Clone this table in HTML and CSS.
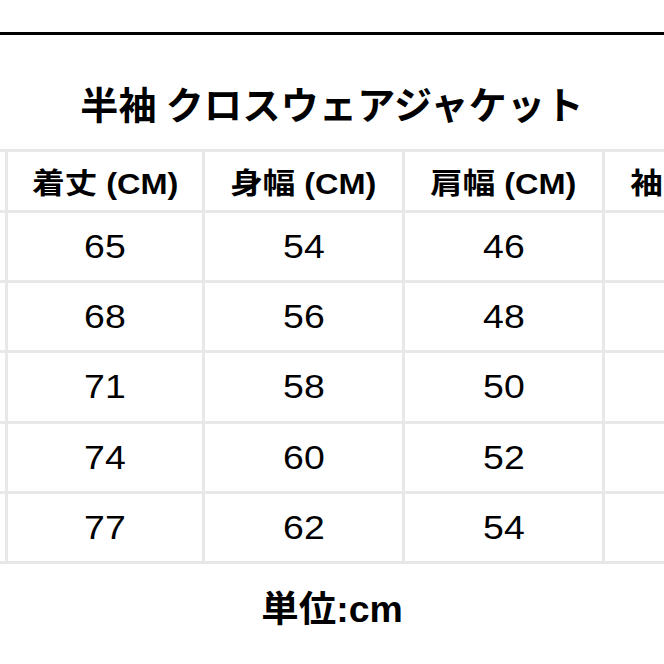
FILE: index.html
```html
<!DOCTYPE html>
<html lang="ja">
<head>
<meta charset="utf-8">
<title>半袖 クロスウェアジャケット</title>
<link rel="stylesheet" href="styles.css">
</head>
<body>
<div class="page">
  <div class="rule"></div>
  <h1 class="title">半袖 クロスウェアジャケット</h1>
  <div class="table-wrap">
    <div class="size-table">
      <div class="cell head"></div>
      <div class="cell head"><span class="txt">着丈 (CM)</span></div>
      <div class="cell head"><span class="txt">身幅 (CM)</span></div>
      <div class="cell head"><span class="txt">肩幅 (CM)</span></div>
      <div class="cell head"><span class="txt">袖丈 (CM)</span></div>

      <div class="cell"></div><div class="cell"><span class="txt">65</span></div><div class="cell"><span class="txt">54</span></div><div class="cell"><span class="txt">46</span></div><div class="cell"></div>
      <div class="cell"></div><div class="cell"><span class="txt">68</span></div><div class="cell"><span class="txt">56</span></div><div class="cell"><span class="txt">48</span></div><div class="cell"></div>
      <div class="cell"></div><div class="cell"><span class="txt">71</span></div><div class="cell"><span class="txt">58</span></div><div class="cell"><span class="txt">50</span></div><div class="cell"></div>
      <div class="cell"></div><div class="cell"><span class="txt">74</span></div><div class="cell"><span class="txt">60</span></div><div class="cell"><span class="txt">52</span></div><div class="cell"></div>
      <div class="cell"></div><div class="cell"><span class="txt">77</span></div><div class="cell"><span class="txt">62</span></div><div class="cell"><span class="txt">54</span></div><div class="cell"></div>
    </div>
  </div>
  <p class="unit"><span class="txt">単位:cm</span></p>
</div>
</body>
</html>
```

FILE: styles.css
```css
html, body {
  margin: 0;
  padding: 0;
  background: #ffffff;
}

.page {
  width: 664px;
  height: 664px;
  overflow: hidden;
  font-family: "Liberation Sans", "Noto Sans CJK JP", sans-serif;
  color: #000;
}

.rule {
  margin-top: 32px;
  height: 3px;
  background: #000;
}

.title {
  margin: 0;
  padding-top: 45px;
  height: 46px;
  line-height: 46px;
  margin-bottom: 22.5px;
  text-align: center;
  font-family: "Noto Sans CJK JP", sans-serif;
  font-weight: 700;
  font-size: 38px;
  letter-spacing: 0.3px;
  white-space: nowrap;
}

.table-wrap {
  width: 664px;
  overflow: hidden;
}

.size-table {
  display: grid;
  grid-template-columns: 197px 194.5px 197px 197px 197px;
  grid-template-rows: 58px repeat(5, 67.4px);
  gap: 3px;
  padding: 3px;
  width: max-content;
  margin-left: -195.5px;
  background: #e8e8e8;
}

.cell {
  background: #ffffff;
  display: flex;
  align-items: center;
  justify-content: center;
  font-size: 34px;
  white-space: nowrap;
}

.txt {
  display: inline-block;
  transform: scaleX(1.1);
}

.head {
  font-weight: 700;
  font-size: 29px;
}

.head .txt {
  transform: scaleX(1.12);
}

.unit {
  margin: 25.5px 0 0;
  height: 40px;
  line-height: 40px;
  text-align: center;
  font-weight: 700;
  font-size: 36px;
}

.unit .txt {
  transform: scaleX(1.04);
}
```
